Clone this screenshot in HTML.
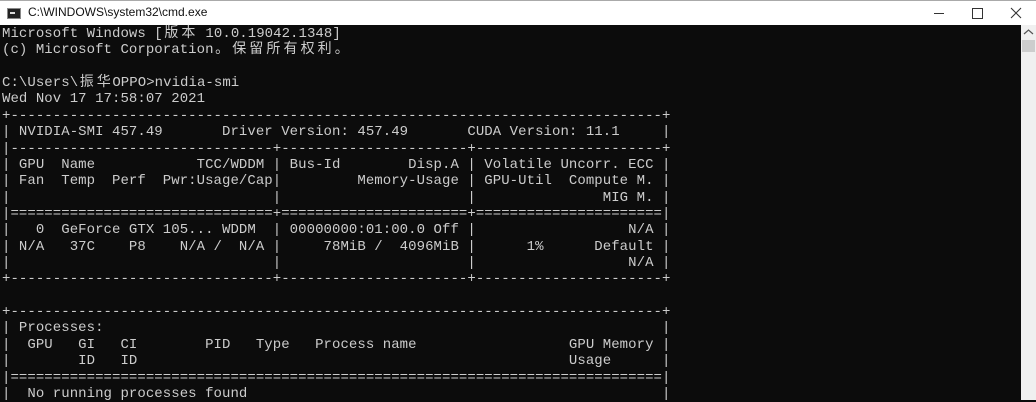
<!DOCTYPE html>
<html><head><meta charset="utf-8"><style>
html,body{margin:0;padding:0;width:1036px;height:400px;overflow:hidden;background:#0c0c0c}
.title{position:absolute;left:0;top:0;width:1036px;height:25px;background:#fff;border-top:1px solid #aaa;box-sizing:border-box}
.title .t{position:absolute;left:28px;top:4px;font:12px "Liberation Sans",sans-serif;color:#111}
.icon{position:absolute;left:7px;top:7px;width:14px;height:11px;background:#222;border:1px solid #888;box-sizing:border-box}
.icon:after{content:"";position:absolute;left:2px;top:3px;width:5px;height:2px;background:#ddd}
.con{position:absolute;left:2px;top:26px;width:1018px;height:375px;}
pre{margin:0;font-family:"Liberation Mono","Noto Sans CJK SC",monospace;font-size:14px;letter-spacing:0.06px;line-height:16.36px;color:#cccccc;white-space:pre}
.c{display:inline-block;width:17.1px;text-align:center;letter-spacing:0}
.sb{position:absolute;left:1021px;top:25px;width:15px;height:375px;background:#f0f0f0}
.thumb{position:absolute;left:1022px;top:40px;width:13px;height:12px;background:#cdcdcd}
</style></head><body>
<div class="title"><div class="icon"></div><div class="t">C:\WINDOWS\system32\cmd.exe</div>
<div style="position:absolute;left:934px;top:12px;width:10px;height:1px;background:#333"></div>
<div style="position:absolute;left:972px;top:7px;width:9px;height:9px;border:1px solid #333"></div>
<svg style="position:absolute;left:1010px;top:6px" width="12" height="12"><path d="M1 1L11 11M11 1L1 11" stroke="#333" stroke-width="1.1"/></svg>
</div>
<div class="sb"></div><div class="thumb"></div>
<svg style="position:absolute;left:1023px;top:28px" width="11" height="8"><path d="M1 6L5.5 2L10 6" stroke="#555" fill="none" stroke-width="1.2"/></svg>
<div class="con"><pre>Microsoft Windows [<span class="c">版</span><span class="c">本</span> 10.0.19042.1348]
(c) Microsoft Corporation<span class="c">。</span><span class="c">保</span><span class="c">留</span><span class="c">所</span><span class="c">有</span><span class="c">权</span><span class="c">利</span><span class="c">。</span>

C:\Users\<span class="c">振</span><span class="c">华</span>OPPO>nvidia-smi
Wed Nov 17 17:58:07 2021
+-----------------------------------------------------------------------------+
| NVIDIA-SMI 457.49       Driver Version: 457.49       CUDA Version: 11.1     |
|-------------------------------+----------------------+----------------------+
| GPU  Name            TCC/WDDM | Bus-Id        Disp.A | Volatile Uncorr. ECC |
| Fan  Temp  Perf  Pwr:Usage/Cap|         Memory-Usage | GPU-Util  Compute M. |
|                               |                      |               MIG M. |
|===============================+======================+======================|
|   0  GeForce GTX 105... WDDM  | 00000000:01:00.0 Off |                  N/A |
| N/A   37C    P8    N/A /  N/A |     78MiB /  4096MiB |      1%      Default |
|                               |                      |                  N/A |
+-------------------------------+----------------------+----------------------+

+-----------------------------------------------------------------------------+
| Processes:                                                                  |
|  GPU   GI   CI        PID   Type   Process name                  GPU Memory |
|        ID   ID                                                   Usage      |
|=============================================================================|
|  No running processes found                                                 |
</pre></div>
</body></html>
